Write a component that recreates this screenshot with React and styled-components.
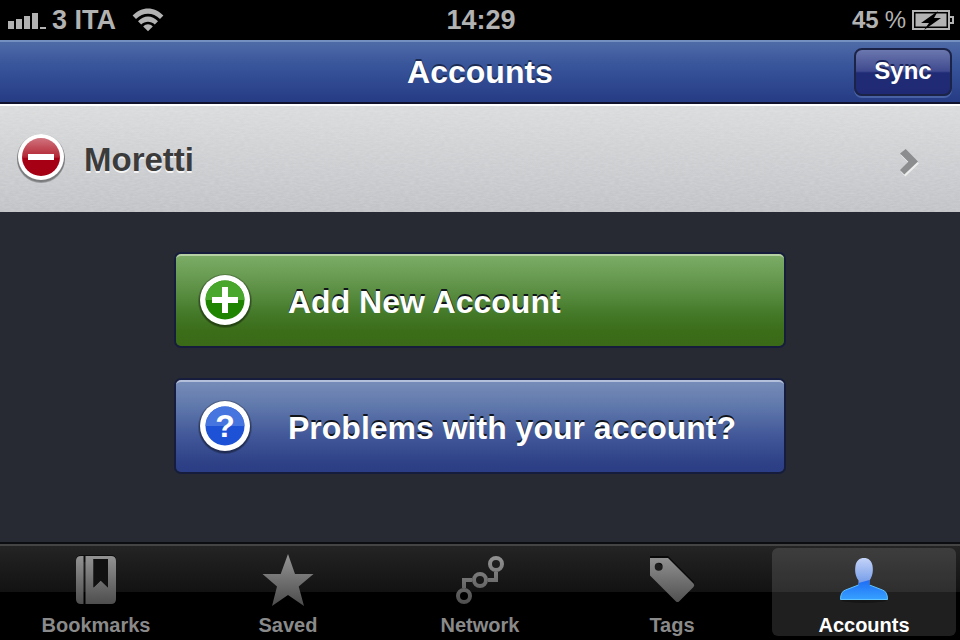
import React, { useState } from "react";
import styled, { createGlobalStyle, css } from "styled-components";

const GlobalStyle = createGlobalStyle`
  * {
    box-sizing: border-box;
  }

  body {
    margin: 0;
    background-color: #272a33;
    font-family: "Liberation Sans", Arial, sans-serif;
    font-weight: bold;
  }

  button {
    font: inherit;
    border: none;
    padding: 0;
    background: none;
    cursor: pointer;
  }
`;

const noise = `url("data:image/svg+xml,%3Csvg xmlns='http://www.w3.org/2000/svg' width='200' height='108'%3E%3Cfilter id='n'%3E%3CfeTurbulence type='fractalNoise' baseFrequency='0.2 0.6' numOctaves='2' stitchTiles='stitch'/%3E%3CfeColorMatrix values='0 0 0 0 1 0 0 0 0 1 0 0 0 0 1 0.25 0 0 0 -0.07'/%3E%3C/filter%3E%3Crect width='200' height='108' filter='url(%23n)'/%3E%3C/svg%3E")`;

const Screen = styled.div`
  display: flex;
  flex-direction: column;
  min-height: 100vh;
`;

const StatusBar = styled.div`
  display: grid;
  grid-template-columns: 1fr auto 1fr;
  align-items: center;
  height: 40px;
  padding: 0 6px 0 8px;
  background-color: #000;
  color: #b2b2b2;
  font-size: 27px;
  line-height: 40px;
`;

const StatusGroup = styled.div`
  display: flex;
  align-items: center;
  justify-content: ${(props) => (props.$end ? "flex-end" : "flex-start")};
  gap: 6px;
`;

const Carrier = styled.span`
  margin-right: 10px;
`;

const Level = styled.span`
  font-size: 24px;
  font-weight: ${(props) => (props.$light ? "normal" : "bold")};
`;

const Header = styled.header`
  display: grid;
  grid-template-columns: 1fr auto 1fr;
  align-items: center;
  height: 64px;
  padding: 0 8px;
  border-top: 2px solid #7390c0;
  border-bottom: 2px solid #10122e;
  background: linear-gradient(#4f6ba7, #38549a 40%, #263c84);
`;

const Title = styled.h1`
  grid-column: 2;
  margin: 0;
  color: #fff;
  font-size: 32px;
  line-height: 36px;
  text-shadow: 0 -2px 0 #1c2b52;
`;

const SyncButton = styled.button`
  justify-self: end;
  min-width: 98px;
  height: 48px;
  padding-bottom: 2px;
  border: 2px solid #1b2347;
  border-radius: 8px;
  background: linear-gradient(#6b77ae, #3f4a8f 48%, #202b76 52%, #202a74);
  box-shadow: 0 2px 0 rgba(120, 150, 210, 0.4);
  color: #fff;
  font-size: 24px;
  text-shadow: 0 -2px 0 #1a2358;
`;

const AccountList = styled.ul`
  margin: 0;
  padding: 0;
  list-style: none;
`;

const AccountRow = styled.li`
  display: flex;
  align-items: center;
  gap: 18px;
  height: 108px;
  padding: 0 42px 0 16px;
  border-top: 2px solid #fff;
  background: ${noise}, linear-gradient(#dadbdc, #c0c2c6);
`;

const IconButton = styled.button`
  display: flex;
`;

const AccountName = styled.button`
  flex: 1;
  display: flex;
  align-items: center;
  justify-content: space-between;
  padding-top: 2px;
  color: #3b3b3b;
  font-size: 33px;
  line-height: 36px;
  text-shadow: 0 2px 0 #f4f4f4;
`;

const Main = styled.main`
  flex: 1;
`;

const Actions = styled.div`
  display: flex;
  flex-direction: column;
  gap: 34px;
  width: 100%;
  max-width: 640px;
  margin: 0 auto;
  padding: 42px 16px;
`;

const tones = {
  green: css`
    border-top-color: #b5d1a3;
    background-image: linear-gradient(#7dad68, #66994f 28%, #447929 65%, #3b6c18 85%, #3a6a17);
  `,
  blue: css`
    border-top-color: #b4bfdc;
    background-image: linear-gradient(#788db9, #6079ac 28%, #425899 60%, #2e4187 90%, #2b3e85);
  `,
};

const ActionButton = styled.button`
  display: flex;
  align-items: center;
  gap: 34px;
  height: 92px;
  padding: 2px 20px 0;
  border-top: 2px solid;
  border-radius: 5px;
  background-origin: border-box;
  box-shadow: 0 0 0 2px #161d3c;
  color: #fff;
  font-size: 32px;
  line-height: 36px;
  text-align: left;
  text-shadow: 0 -2px 0 #10151c;
  ${(props) => tones[props.$tone]}
`;

const TabBar = styled.nav`
  display: grid;
  grid-template-columns: repeat(5, 1fr);
  height: 98px;
  border-top: 2px solid #0c0d10;
  background: linear-gradient(#444 2px, #242424 2px, #121212 48px, #000 48px);
`;

const Tab = styled.button`
  display: flex;
  flex-direction: column;
  align-items: center;
  gap: 8px;
  margin: 4px;
  padding-top: 6px;
  border-radius: 6px;
  background-color: ${(props) => (props.$active ? "rgba(255, 255, 255, 0.12)" : "transparent")};
  color: ${(props) => (props.$active ? "#fff" : "#8a8a8a")};
  font-size: 20px;
  line-height: 22px;
`;

const Drawing = styled.svg`
  display: block;
  flex: none;
  overflow: visible;
  text-shadow: none;
`;

const SignalIcon = () => (
  <Drawing width="38" height="18" fill="#b2b2b2">
    <path d="M0 10h6v8H0zM8 8h6v10H8zM16 5h6v13h-6zM24 2h6v16h-6zM32 16h6v2h-6z" />
  </Drawing>
);

const WifiIcon = () => (
  <Drawing width="32" height="24" fill="#b2b2b2">
    <path d="M0.6 7.6C9.5-1.8 22.5-1.8 31.4 7.6L28 11C21 4 11 4 4 11z" />
    <path d="M6 13.3C12 7 20 7 26 13.3L22.8 16.5C19 12.8 13 12.8 9.2 16.5z" />
    <path d="M11.2 18.4C14 15.6 18 15.6 20.8 18.4L16 23.2z" />
  </Drawing>
);

const BatteryIcon = () => (
  <Drawing width="42" height="20" fill="#b2b2b2">
    <path d="M1 1h36v18H1zM38 7h3v6h-3" fill="none" stroke="#b2b2b2" strokeWidth="2" />
    <path d="M3 3h32v14H3z" />
    <path d="M3 3h32v14H3z" fill="none" stroke="#000" />
    <path d="M26 1L9 13h8l-5 7L29 8h-7z" fill="#000" />
  </Drawing>
);

const MinusIcon = () => (
  <Drawing width="50" height="50">
    <defs>
      <linearGradient id="red" x2="0" y2="1">
        <stop offset="0" stopColor="#d0747e" />
        <stop offset="0.5" stopColor="#b32634" />
        <stop offset="0.54" stopColor="#a60014" />
        <stop offset="1" stopColor="#a60014" />
      </linearGradient>
    </defs>
    <circle cx="25" cy="24" r="24" fill="#000" opacity="0.2" />
    <circle cx="25" cy="25" r="24" fill="#000" opacity="0.25" />
    <circle cx="25" cy="23" r="23" fill="#fff" />
    <circle cx="25" cy="23" r="19" fill="url(#red)" />
    <path d="M12 20h26v6H12z" fill="#fff" />
  </Drawing>
);

const RoundIcon = ({ top, bottom, children }) => (
  <Drawing width="58" height="58">
    <circle cx="29" cy="28" r="27" fill="#000" opacity="0.2" />
    <circle cx="29" cy="28" r="26" fill="#000" opacity="0.25" />
    <circle cx="29" cy="27" r="25" fill="#fff" />
    <circle cx="29" cy="27" r="19.5" fill={bottom} />
    <path d="M9.5 27a19.5 19.5 0 0 1 39 0z" fill={top} />
    {children}
  </Drawing>
);

const ChevronIcon = () => (
  <Drawing width="18" height="26">
    <path d="M6.7 4L19 16.4 5.3 29.4 1 25l8.3-8.3L1 8.4z" fill="#eee" />
    <path d="M5.7 2L18 14.4 4.3 27.4 0 23l8.3-8.3L0 6.4z" fill="#8c8d8e" />
  </Drawing>
);

const TabIcon = ({ children }) => (
  <Drawing width="56" height="52">
    <defs>
      <linearGradient id="gray" gradientUnits="userSpaceOnUse" x1="0" y1="2" x2="0" y2="50">
        <stop offset="0" stopColor="#939393" />
        <stop offset="1" stopColor="#4e4e4e" />
      </linearGradient>
      <linearGradient id="head" gradientUnits="userSpaceOnUse" x1="0" y1="4" x2="0" y2="30">
        <stop offset="0" stopColor="#c4d3f8" />
        <stop offset="1" stopColor="#719ae9" />
      </linearGradient>
      <linearGradient id="body" gradientUnits="userSpaceOnUse" x1="0" y1="26" x2="0" y2="46">
        <stop offset="0" stopColor="#1f6cf5" />
        <stop offset="1" stopColor="#37a2ff" />
      </linearGradient>
    </defs>
    {children}
  </Drawing>
);

const bookmarksIcon = (
  <>
    <path d="M14 1h29q5 0 5 5v2H8V6q0-5 6-5" fill="#0c0c0c" />
    <path d="M13 2h2.5v48H13q-5 0-5-5V7q0-5 5-5z" fill="url(#gray)" />
    <path
      d="M17.5 2H43q5 0 5 5v38q0 5-5 5H17.5zM25.5 5v28.5l7.2-7 7.3 7V5z"
      fill="url(#gray)"
      fillRule="evenodd"
    />
    <path d="M25.5 5v28.5l7.2-7 7.3 7V5z" fill="#111" />
  </>
);

const savedIcon = (
  <path
    d="M28 0l7 20h18.5L38.7 32.5 44 52 28 41 12 52l5-19.5L2.5 20h18.2z"
    fill="url(#gray)"
  />
);

const networkIcon = (
  <g fill="none" stroke="url(#gray)" strokeWidth="4">
    <circle cx="44" cy="10" r="6" />
    <circle cx="28" cy="26" r="6" />
    <circle cx="12" cy="42" r="6" />
    <path d="M12 34v-8h8M36 26h8v-8" />
  </g>
);

const tagsIcon = (
  <>
    <path d="M6 4V2h18l26 26v3z" fill="#080808" />
    <path
      d="M6 4h18l25.5 25.5q1.5 1.5 0 3.5L35 47.5q-1.5 1-3 0L6 21.5zM10.7 12.7a4 4 0 1 0 8 0 4 4 0 1 0-8 0z"
      fill="url(#gray)"
      fillRule="evenodd"
    />
  </>
);

const accountsIcon = (
  <>
    <ellipse cx="28" cy="46" rx="23" ry="3" fill="#000" opacity="0.3" />
    <path
      d="M22.5 31v-4.5C18.5 21 19 15 19.5 11.5 20.5 6.5 23.5 4 28 4s7.5 2.5 8.5 7.5C37 15 37.5 21 33.5 26.5V30z"
      fill="url(#head)"
    />
    <path d="M22.5 29l11-3v5l13 5q5 1.5 5 9.5h-47q0-8 5-9.5l13-5z" fill="url(#body)" />
    <path d="M22.5 31l-13 5q-5 1.5-5 9.5h47q0-8-5-9.5l-13-5" fill="none" stroke="#62c4ff" />
  </>
);

const tabs = [
  { name: "Bookmarks", icon: bookmarksIcon },
  { name: "Saved", icon: savedIcon },
  { name: "Network", icon: networkIcon },
  { name: "Tags", icon: tagsIcon },
  { name: "Accounts", icon: accountsIcon },
];

const App = () => {
  const [active, setActive] = useState("Accounts");

  return (
    <Screen>
      <GlobalStyle />
      <StatusBar>
        <StatusGroup>
          <SignalIcon />
          <Carrier>3 ITA</Carrier>
          <WifiIcon />
        </StatusGroup>
        <span>14:29</span>
        <StatusGroup $end>
          <Level>45</Level>
          <Level $light>%</Level>
          <BatteryIcon />
        </StatusGroup>
      </StatusBar>

      <Header>
        <Title>Accounts</Title>
        <SyncButton>Sync</SyncButton>
      </Header>

      <Main>
        <AccountList>
          <AccountRow>
            <IconButton aria-label="Remove Moretti">
              <MinusIcon />
            </IconButton>
            <AccountName>
              Moretti
              <ChevronIcon />
            </AccountName>
          </AccountRow>
        </AccountList>

        <Actions>
          <ActionButton $tone="green">
            <RoundIcon top="#48a72c" bottom="#1f8500">
              <path d="M26 14h6v10h10v6H32v10h-6V30H16v-6h10z" fill="#fff" />
            </RoundIcon>
            Add New Account
          </ActionButton>
          <ActionButton $tone="blue">
            <RoundIcon top="#4675e0" bottom="#1d51d6">
              <text x="29" y="38" fill="#fff" fontSize="32" textAnchor="middle">
                ?
              </text>
            </RoundIcon>
            Problems with your account?
          </ActionButton>
        </Actions>
      </Main>

      <TabBar>
        {tabs.map((tab) => (
          <Tab key={tab.name} $active={tab.name === active} onClick={() => setActive(tab.name)}>
            <TabIcon>{tab.icon}</TabIcon>
            {tab.name}
          </Tab>
        ))}
      </TabBar>
    </Screen>
  );
};

export default App;
